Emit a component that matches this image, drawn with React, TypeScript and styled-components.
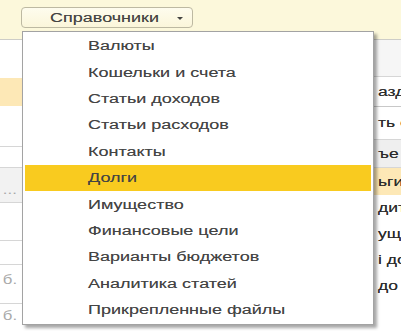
import styled, { createGlobalStyle } from "styled-components";

const GlobalStyle = createGlobalStyle`
   html, body {
      margin: 0;
      padding: 0;
      background: #ffffff;
      font-family: "Liberation Sans", Arial, sans-serif;
   }
`;

const menuItems = [
   "Валюты",
   "Кошельки и счета",
   "Статьи доходов",
   "Статьи расходов",
   "Контакты",
   "Долги",
   "Имущество",
   "Финансовые цели",
   "Варианты бюджетов",
   "Аналитика статей",
   "Прикрепленные файлы",
];

// left strip of the table behind the menu
const leftRows = [
   { h: 38, bg: "#ffffff", text: "", line: false, pad: 0 },
   { h: 28, bg: "#fde8b6", text: "", line: false, pad: 0 },
   { h: 41, bg: "#ffffff", text: "", line: true, pad: 0 },
   { h: 21, bg: "#ffffff", text: "", line: true, pad: 0 },
   { h: 35, bg: "#f2f2f2", text: "...", line: true, pad: 10 },
   { h: 38, bg: "#ffffff", text: "", line: true, pad: 0 },
   { h: 24, bg: "#ffffff", text: "", line: true, pad: 0 },
   { h: 39, bg: "#ffffff", text: "б.", line: true, pad: -8 },
   { h: 30, bg: "#ffffff", text: "б.", line: false, pad: -6 },
];

// right strip, words cut by the menu
const rightRows = [
   { h: 37, bg: "#f6f6f6", text: "", line: true },
   { h: 29, bg: "#ffffff", text: "азд", line: false },
   { h: 34, bg: "#ffffff", text: "ть о", line: true, boxed: true },
   { h: 28, bg: "#efefef", text: "ъе", line: true },
   { h: 27, bg: "#fde8b6", text: "ьги", line: false },
   { h: 26, bg: "#ffffff", text: "дит", line: false },
   { h: 26, bg: "#ffffff", text: "уще", line: false },
   { h: 26, bg: "#ffffff", text: "і до", line: false },
   { h: 26, bg: "#ffffff", text: "до", line: false },
   { h: 40, bg: "#ffffff", text: "", line: false },
];

export default function App() {
   return (
      <Page>
         <GlobalStyle />
         <TopBar>
            <MenuButton>
               <Stretch>Справочники</Stretch>
               <Caret />
            </MenuButton>
         </TopBar>
         <Work>
            <LeftPane>
               {leftRows.map((r, i) => (
                  <Row key={i} $h={r.h} $bg={r.bg} $line={r.line}>
                     <FadedText $pad={r.pad}>{r.text}</FadedText>
                  </Row>
               ))}
            </LeftPane>
            <RightPane>
               {rightRows.map((r, i) => (
                  <Row key={i} $h={r.h} $bg={r.bg} $line={r.line} $boxed={r.boxed}>
                     <DarkText>{r.text}</DarkText>
                  </Row>
               ))}
            </RightPane>
         </Work>
         <Dropdown>
            {menuItems.map((label) => (
               <MenuItem key={label} $active={label === "Долги"}>
                  <Stretch>{label}</Stretch>
               </MenuItem>
            ))}
         </Dropdown>
      </Page>
   );
}

const Page = styled.div`
   position: relative;
   display: flex;
   flex-direction: column;
   width: 100vw;
   height: 100vh;
   overflow: hidden;
`;

const TopBar = styled.div`
   height: 40px;
   flex-shrink: 0;
   background: #fcf8db;
   border-bottom: 1px solid #cdcdc8;
   box-sizing: border-box;
   padding: 7px 0 0 21px;
`;

const MenuButton = styled.div`
   display: flex;
   align-items: center;
   width: 172px;
   height: 21px;
   box-sizing: border-box;
   padding-left: 28px;
   border: 1px solid #bdb9a2;
   border-radius: 4px;
   background: linear-gradient(#fefcee, #fbf6da);
   color: #444442;
   font-size: 12.5px;
`;

const Stretch = styled.span`
   display: inline-block;
   white-space: nowrap;
   transform: scaleX(1.44);
   transform-origin: left center;
   text-shadow: 0 0 0.5px rgba(60, 60, 60, 0.6);
`;

const Caret = styled.span`
   margin-left: 51px;
   width: 0;
   height: 0;
   border-left: 3px solid transparent;
   border-right: 3px solid transparent;
   border-top: 3px solid #444442;
   margin-top: 1px;
`;

const Work = styled.div`
   flex: 1;
   display: flex;
   justify-content: space-between;
`;

const LeftPane = styled.div`
   width: 22px;
   display: flex;
   flex-direction: column;
`;

const RightPane = styled.div`
   width: 30px;
   display: flex;
   flex-direction: column;
   overflow: hidden;
`;

const Row = styled.div<{ $h: number; $bg: string; $line: boolean; $boxed?: boolean }>`
   height: ${(p) => p.$h}px;
   flex-shrink: 0;
   box-sizing: border-box;
   display: flex;
   align-items: center;
   background: ${(p) => p.$bg};
   border-bottom: ${(p) => (p.$line ? "1px solid #d6d6d6" : "none")};
   border-top: ${(p) => (p.$boxed ? "1px solid #c8c8c8" : "none")};
   overflow: hidden;
   white-space: nowrap;
`;

const FadedText = styled.span<{ $pad: number }>`
   display: inline-block;
   padding-left: 2px;
   margin-top: ${(p) => p.$pad}px;
   font-size: 12px;
   color: #a9a9a9;
   transform: scaleX(1.4);
   transform-origin: left center;
`;

const DarkText = styled.span`
   display: inline-block;
   padding-left: 5px;
   font-size: 12.5px;
   color: #2a2a2a;
   transform: scaleX(1.4);
   transform-origin: left center;
   text-shadow: 0 0 0.5px rgba(40, 40, 40, 0.7);
`;

const Dropdown = styled.div`
   position: absolute;
   top: 31px;
   left: 22px;
   width: 352px;
   box-sizing: border-box;
   padding: 1px 1px 1px 2px;
   background: #ffffff;
   border: 1px solid #a3a3a3;
   box-shadow: 3px 3px 3px rgba(0, 0, 0, 0.35);
`;

const MenuItem = styled.div<{ $active: boolean }>`
   height: 26.4px;
   display: flex;
   align-items: center;
   margin-right: 1px;
   padding-left: 63px;
   background: ${(p) => (p.$active ? "#f9cb1f" : "transparent")};
   color: #444444;
   font-size: 12.5px;
`;
